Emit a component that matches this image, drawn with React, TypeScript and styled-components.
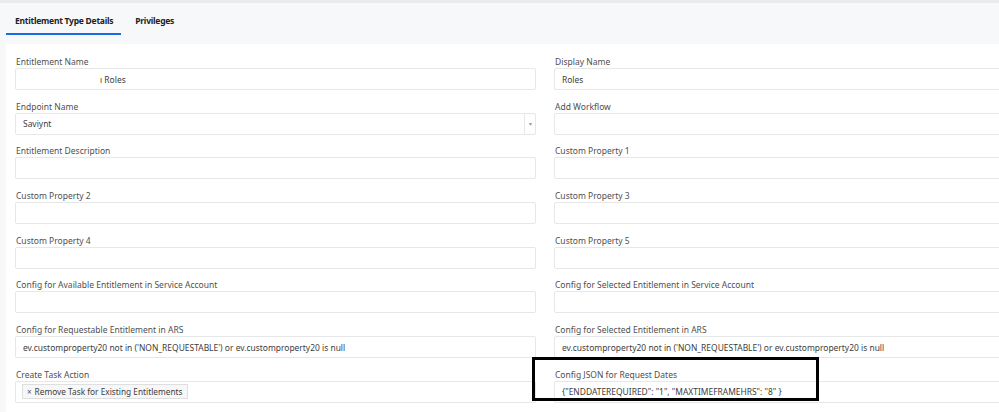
import React from 'react';
import styled, { createGlobalStyle } from 'styled-components';

const GlobalStyle = createGlobalStyle`
  html, body {
    margin: 0;
    padding: 0;
    background: #f7f8fa;
    overflow: hidden;
  }
  body {
    font-family: 'Noto Sans', 'Open Sans', sans-serif;
  }
`;

const Page = styled.div`
  width: 999px;
  height: 412px;
  border-top: 3px solid #e9ebee;
  box-sizing: border-box;
  background: #f7f8fa;
  overflow: hidden;
`;

const TabBar = styled.div`
  display: flex;
  height: 41px;
  padding-left: 6px;
  align-items: flex-start;
`;

const Tab = styled.div<{ active?: boolean }>`
  height: 26px;
  margin-top: 4px;
  padding: 0 8px 0 9px;
  margin-right: 5px;
  display: flex;
  align-items: center;
  font-size: 8.5px;
  font-weight: 700;
  letter-spacing: -0.25px;
  color: #222;
  border-bottom: 2px solid ${({ active }) => (active ? '#1a6be3' : 'transparent')};
`;

const Panel = styled.div`
  margin-left: 6px;
  background: #fff;
  height: 370px;
  padding: 10px 0 0 9px;
  box-sizing: border-box;
`;

const Grid = styled.div`
  display: grid;
  grid-template-columns: 521px 521px;
  column-gap: 18px;
  row-gap: 8.7px;
`;

const Field = styled.div`
  position: relative;
  display: flex;
  flex-direction: column;
`;

const Label = styled.div`
  height: 14px;
  line-height: 15.5px;
  font-size: 8.5px;
  color: #4f4f4f;
  padding-left: 1px;
  white-space: nowrap;
`;

const Input = styled.div<{ indent?: number }>`
  position: relative;
  height: 22px;
  box-sizing: border-box;
  border: 1px solid #e6e7e9;
  border-radius: 2px;
  display: flex;
  align-items: center;
  padding-left: ${({ indent }) => (indent ? indent : 7)}px;
  font-size: 8.45px;
  color: #3d3d3d;
  white-space: nowrap;
  overflow: hidden;
`;

const Arrow = styled.div`
  position: absolute;
  right: 0;
  top: 0;
  bottom: 0;
  width: 10px;
  border-left: 1px solid #e6e7e9;
  display: flex;
  align-items: center;
  justify-content: center;
  font-size: 6px;
  color: #9a9a9a;
`;

const Mask = styled.div`
  position: absolute;
  left: -1px;
  top: -2px;
  width: 83px;
  height: 23px;
  background: #fff;
`;

const Chip = styled.span`
  display: inline-flex;
  align-items: center;
  height: 15px;
  box-sizing: border-box;
  border: 1px solid #dedfe1;
  background: #f7f7f8;
  padding: 0 4px 0 4px;
  font-size: 8.3px;
  color: #3d3d3d;
`;

const ChipX = styled.span`
  font-size: 8px;
  margin-right: 3px;
  color: #555;
`;

const Highlight = styled.div`
  position: absolute;
  left: -22px;
  top: -10px;
  width: 287px;
  height: 44px;
  border: 3px solid #000;
  box-sizing: border-box;
  pointer-events: none;
`;

const query =
  "ev.customproperty20 not in ('NON_REQUESTABLE') or ev.customproperty20 is null";

type FieldDef = {
  label: string;
  value?: React.ReactNode;
  select?: boolean;
  mask?: boolean;
  highlight?: boolean;
};

const fields: FieldDef[] = [
  { label: 'Entitlement Name', value: 'ı Roles', mask: true },
  { label: 'Display Name', value: 'Roles' },
  { label: 'Endpoint Name', value: 'Saviynt', select: true },
  { label: 'Add Workflow' },
  { label: 'Entitlement Description' },
  { label: 'Custom Property 1' },
  { label: 'Custom Property 2' },
  { label: 'Custom Property 3' },
  { label: 'Custom Property 4' },
  { label: 'Custom Property 5' },
  { label: 'Config for Available Entitlement in Service Account' },
  { label: 'Config for Selected Entitlement in Service Account' },
  { label: 'Config for Requestable Entitlement in ARS', value: query },
  { label: 'Config for Selected Entitlement in ARS', value: query },
  {
    label: 'Create Task Action',
    value: (
      <Chip>
        <ChipX>×</ChipX>Remove Task for Existing Entitlements
      </Chip>
    ),
  },
  {
    label: 'Config JSON for Request Dates',
    value: '{"ENDDATEREQUIRED": "1", "MAXTIMEFRAMEHRS": "8" }',
    highlight: true,
  },
];

export default function App() {
  return (
    <Page>
      <GlobalStyle />
      <TabBar>
        <Tab active>Entitlement Type Details</Tab>
        <Tab>Privileges</Tab>
      </TabBar>
      <Panel>
        <Grid>
          {fields.map((f) => (
            <Field key={f.label}>
              <Label>{f.label}</Label>
              <Input indent={f.label === 'Create Task Action' ? 6 : f.mask ? 84 : 7}>
                {f.mask && <Mask />}
                {f.value}
                {f.select && <Arrow>▾</Arrow>}
              </Input>
              {f.highlight && <Highlight />}
            </Field>
          ))}
        </Grid>
      </Panel>
    </Page>
  );
}
